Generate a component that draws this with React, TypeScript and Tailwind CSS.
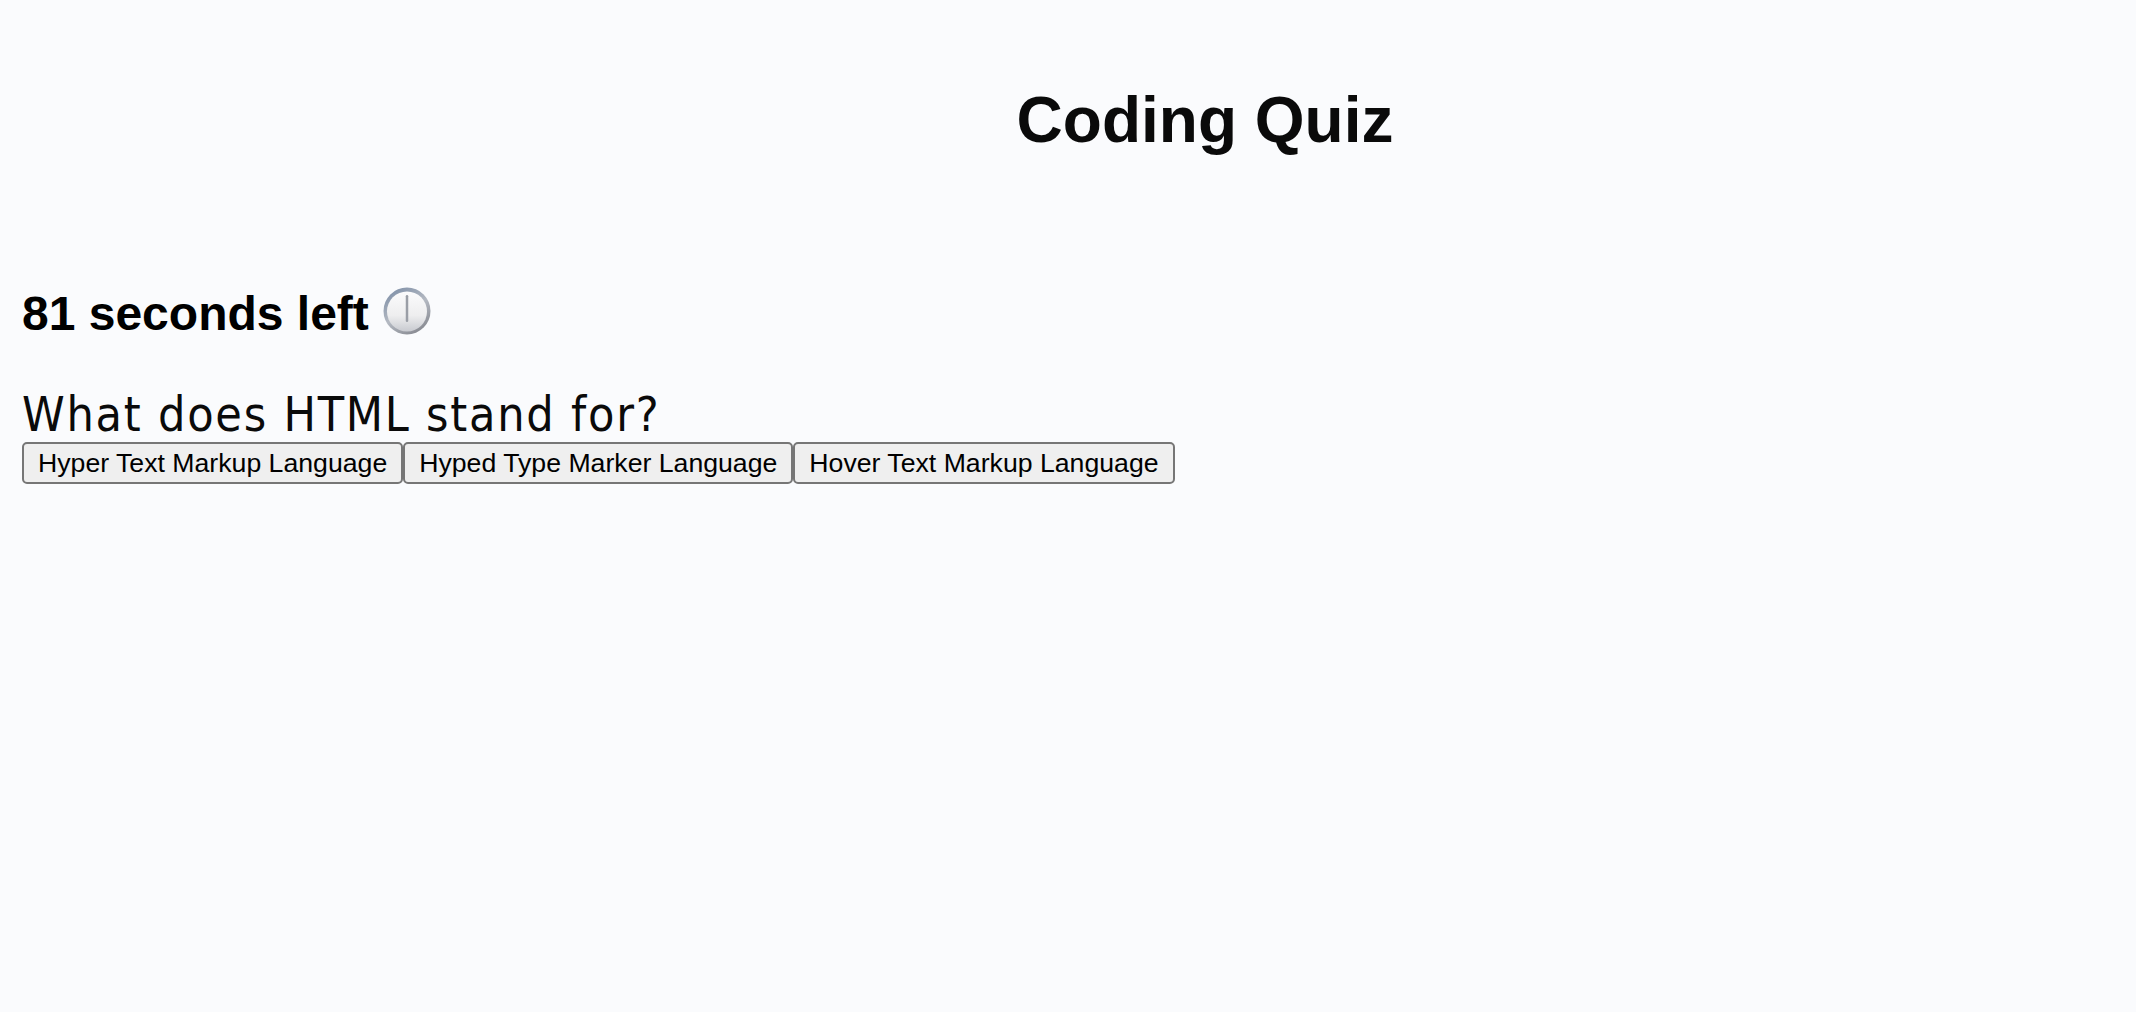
export default function App() {
  const answers = ["Hyper Text Markup Language", "Hyped Type Marker Language", "Hover Text Markup Language"];
  return (
    <div className="min-h-[1012px] bg-[#fafbfd] font-['Liberation_Sans',Arial,sans-serif]">
      <header className="flex justify-center pl-[274px] pt-[78px]">
        <h1 className="text-[64px] leading-[84px] font-bold text-[#0a0a0a]">Coding Quiz</h1>
      </header>
      <main className="px-[22px] pt-[124px]">
        <div className="flex items-center h-[56px]">
          <h2 className="text-[48px] leading-[56px] font-bold text-black">81 seconds left</h2>
          <svg className="ml-[14px] -mt-[6px]" width="48" height="48" viewBox="0 0 48 48" aria-hidden="true">
            <defs>
              <linearGradient id="rim" x1="0.2" y1="0" x2="0.8" y2="1">
                <stop offset="0" stopColor="#7f90a8" />
                <stop offset="0.5" stopColor="#b4b9c2" />
                <stop offset="1" stopColor="#83858c" />
              </linearGradient>
              <linearGradient id="face" x1="0" y1="0" x2="0" y2="1">
                <stop offset="0" stopColor="#fbfbfc" />
                <stop offset="0.6" stopColor="#eeeeef" />
                <stop offset="1" stopColor="#c8cad0" />
              </linearGradient>
            </defs>
            <circle cx="24" cy="24" r="23.5" fill="url(#rim)" />
            <circle cx="24" cy="24.5" r="20" fill="url(#face)" />
            <rect x="22.75" y="8" width="2.5" height="27" rx="1.25" fill="#9a9ea6" />
          </svg>
        </div>
        <p className="mt-[44px] text-[48px] leading-[56px] tracking-[1.76px] text-[#0a0a0a] font-['DejaVu_Sans_Condensed','DejaVu_Sans',sans-serif]">What does HTML stand for?</p>
        <div className="flex">
          {answers.map((a) => (
            <button key={a} className="h-[42px] px-[14px] bg-[#efefef] border-2 border-[#767676] rounded-[5px] text-[26.67px] leading-[30px] text-black whitespace-nowrap">
              {a}
            </button>
          ))}
        </div>
      </main>
    </div>
  );
}
